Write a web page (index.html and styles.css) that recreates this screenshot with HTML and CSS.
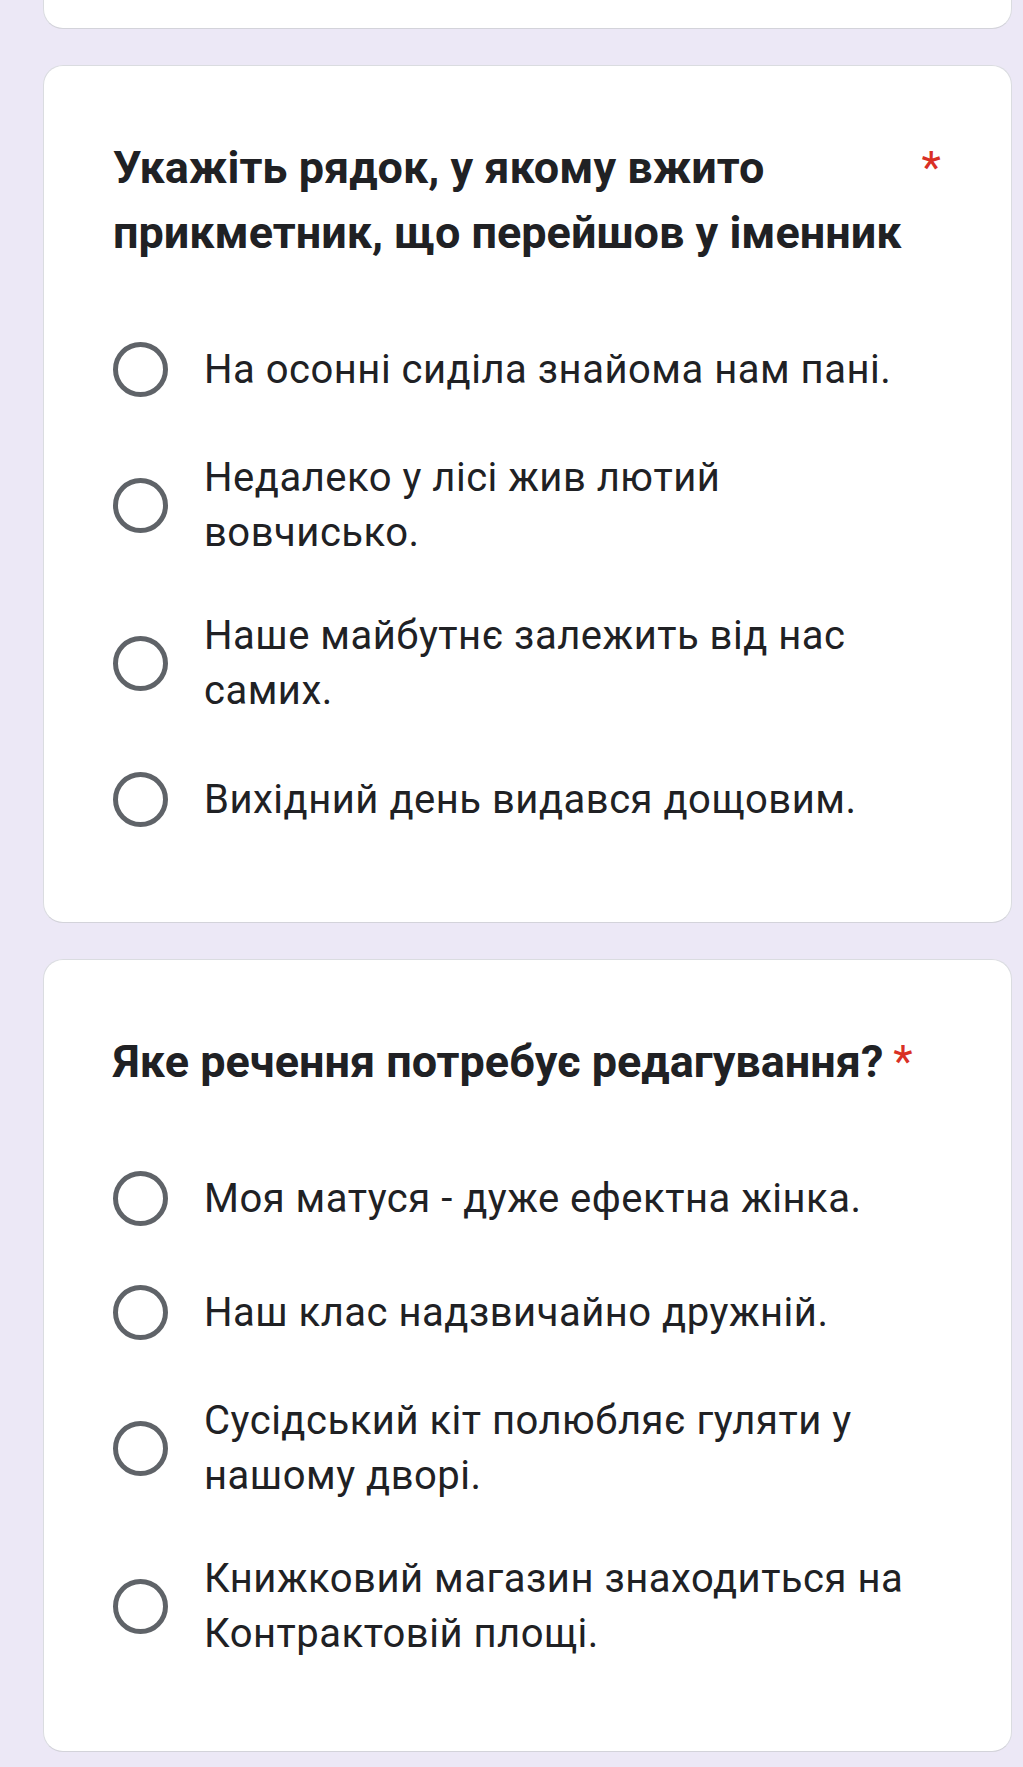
FILE: index.html
```html
<!DOCTYPE html>
<html lang="uk">
<head>
<meta charset="utf-8">
<link rel="stylesheet" href="styles.css">
</head>
<body>
<div class="page">
  <div class="card card--tail"></div>

  <div class="card">
    <div class="title-row">
      <div class="title">Укажіть рядок, у якому вжито прикметник, що перейшов у іменник</div>
      <span class="req">*</span>
    </div>
    <div class="options">
      <div class="option"><span class="radio"></span><span class="label">На осонні сиділа знайома нам пані.</span></div>
      <div class="option"><span class="radio"></span><span class="label">Недалеко у лісі жив лютий вовчисько.</span></div>
      <div class="option"><span class="radio"></span><span class="label">Наше майбутнє залежить від нас самих.</span></div>
      <div class="option"><span class="radio"></span><span class="label">Вихідний день видався дощовим.</span></div>
    </div>
  </div>

  <div class="card">
    <div class="title-row">
      <div class="title">Яке речення потребує редагування?</div>
      <span class="req">*</span>
    </div>
    <div class="options">
      <div class="option"><span class="radio"></span><span class="label">Моя матуся - дуже ефектна жінка.</span></div>
      <div class="option"><span class="radio"></span><span class="label">Наш клас надзвичайно дружній.</span></div>
      <div class="option"><span class="radio"></span><span class="label">Сусідський кіт полюбляє гуляти у нашому дворі.</span></div>
      <div class="option"><span class="radio"></span><span class="label">Книжковий магазин знаходиться на Контрактовій площі.</span></div>
    </div>
  </div>
</div>
</body>
</html>
```

FILE: styles.css
```css
html, body {
  margin: 0;
  padding: 0;
}
body {
  background: #ece8f6;
  font-family: Roboto, "Noto Sans", Arial, sans-serif;
  color: #202124;
}
.page {
  display: flex;
  flex-direction: column;
  gap: 36px;
  padding: 0 11px 0 43px;
}
.card {
  background: #fff;
  border: 1px solid #dadce0;
  border-bottom-color: #d3d3da;
  border-radius: 20px;
  padding: 69px 70px 90px 69px;
}
.card--tail {
  border-top: none;
  border-radius: 0 0 20px 20px;
  height: 29px;
  padding: 0;
  box-sizing: border-box;
}
.title-row {
  display: flex;
  align-items: flex-start;
}
.title {
  flex: 0 1 auto;
  font-size: 45px;
  font-weight: 700;
  line-height: 65px;
}
.req {
  flex: none;
  color: #d93025;
  font-size: 45px;
  line-height: 65px;
  margin-left: 10px;
}
.options {
  display: flex;
  flex-direction: column;
  gap: 48px;
  margin-top: 71px;
}
.option {
  display: flex;
  align-items: center;
  min-height: 66px;
}
.radio {
  flex: none;
  width: 55px;
  height: 55px;
  box-sizing: border-box;
  border: 5.5px solid #5f6368;
  border-radius: 50%;
  margin-right: 36px;
}
.label {
  font-size: 40px;
  letter-spacing: 0.5px;
  line-height: 55px;
  color: #202124;
}
```
